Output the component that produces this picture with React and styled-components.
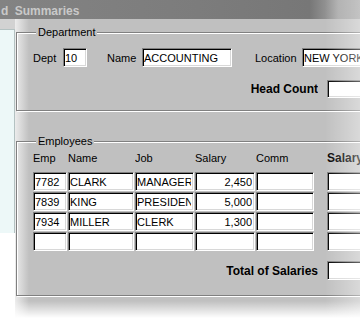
import React from 'react';
import styled, { createGlobalStyle } from 'styled-components';

const Global = createGlobalStyle`
  html, body { margin: 0; padding: 0; background: #fff; }
  body { font-family: "Liberation Sans", Arial, sans-serif; font-size: 11px; color: #000; }
`;

const Screen = styled.div`
  position: relative;
  width: 360px;
  height: 320px;
  overflow: hidden;
  background: #fff;
  display: flex;
  flex-direction: column;
  &::after {
    content: '';
    position: absolute;
    inset: 0;
    pointer-events: none;
    background: linear-gradient(to right, rgba(255,255,255,0) 325px, rgba(255,255,255,0.4) 360px);
  }
`;

const TitleBar = styled.div`
  flex: none;
  box-sizing: border-box;
  height: 19px;
  padding: 4px 0 0 1px;
  background: linear-gradient(to right, #838383 0%, #7c7c7c 55%, #777 86%, #a6a6a6 94%, #9c9c9c 100%);
  color: #c9c9c9;
  font-weight: bold;
  font-size: 12px;
  line-height: 14px;
  word-spacing: 3px;
  white-space: nowrap;
  overflow: hidden;
`;

const Main = styled.div`
  flex: 1;
  display: flex;
`;

const Side = styled.div`
  flex: none;
  width: 15px;
  display: flex;
  flex-direction: column;
  background: linear-gradient(to bottom, #d2d2d2 0, #d2d2d2 10px, #fff 10px);
`;

const SidePanel = styled.div`
  margin-top: 10px;
  box-sizing: border-box;
  height: 204px;
  background: #edf8f8;
  border-top: 1px solid #b4c2c2;
  border-right: 1px solid #b4c2c2;
`;

const Body = styled.div`
  flex: 1;
  padding-top: 13px;
  background:
    linear-gradient(to bottom, rgba(255,255,255,0) 0, rgba(255,255,255,0) 282px, #fff 299px),
    linear-gradient(to right, #ececec 0, #c0c0c0 14px);
`;

const GroupBox = styled.div`
  position: relative;
  box-sizing: border-box;
  width: 420px;
  height: ${p => p.h}px;
  margin-left: 1px;
  margin-top: ${p => p.mt || 0}px;
  border: 1px solid #808080;
  box-shadow: inset 1px 1px 0 #fff, 1px 1px 0 #fff;
  padding: ${p => p.pt}px 0 0 16px;
`;

const Legend = styled.span`
  position: absolute;
  top: -8px;
  left: 19px;
  padding: 0 2px;
  background: #c0c0c0;
  line-height: 14px;
  font-size: 11px;
`;

const Row = styled.div`
  display: flex;
  align-items: center;
  gap: ${p => p.gap || 0}px;
  margin-top: ${p => p.mt || 0}px;
  width: ${p => p.w ? `${p.w}px` : 'auto'};
  justify-content: ${p => p.end ? 'flex-end' : 'flex-start'};
`;

const Label = styled.span`
  flex: none;
  width: ${p => p.w ? `${p.w}px` : 'auto'};
  margin-left: ${p => p.ml || 0}px;
  margin-right: ${p => p.mr || 0}px;
  font-size: ${p => p.bold ? 12 : 11}px;
  font-weight: ${p => p.bold ? 'bold' : 'normal'};
  line-height: 16px;
  white-space: nowrap;
  overflow: hidden;
`;

const Field = styled.input`
  flex: none;
  box-sizing: border-box;
  width: ${p => p.w}px;
  height: ${p => p.h || 19}px;
  margin: 0;
  padding: 0 2px 0 1px;
  background: #fff;
  border-top: 1px solid #808080;
  border-left: 1px solid #808080;
  border-right: 1px solid #fff;
  border-bottom: 1px solid #fff;
  box-shadow: inset 1px 1px 0 #000, inset -1px -1px 0 #d8d8d8;
  font-family: "Liberation Sans", Arial, sans-serif;
  font-size: 11px;
  color: #000;
  text-align: ${p => p.right ? 'right' : 'left'};
  outline: none;
`;

const Rows = styled.div`
  display: flex;
  flex-direction: column;
  gap: 1px;
  margin-top: 6px;
`;

const COLS = [34, 66, 59, 60, 58];

const employees = [
  ['7782', 'CLARK', 'MANAGER', '2,450', ''],
  ['7839', 'KING', 'PRESIDENT', '5,000', ''],
  ['7934', 'MILLER', 'CLERK', '1,300', ''],
  ['', '', '', '', ''],
];

export default function App() {
  return (
    <>
      <Global />
      <Screen>
        <TitleBar>d Summaries</TitleBar>
        <Main>
          <Side>
            <SidePanel />
          </Side>
          <Body>
            <GroupBox h={79} pt={15}>
              <Legend>Department</Legend>
              <Row>
                <Label w={30}>Dept</Label>
                <Field w={24} readOnly value="10" />
                <Label w={35} ml={20}>Name</Label>
                <Field w={90} readOnly value="ACCOUNTING" />
                <Label w={47} ml={23}>Location</Label>
                <Field w={90} readOnly value="NEW YORK" />
              </Row>
              <Row mt={13} w={354} end="1">
                <Label bold mr={9}>Head Count</Label>
                <Field w={60} h={18} readOnly value="" />
              </Row>
            </GroupBox>
            <GroupBox h={155} mt={30} pt={8}>
              <Legend>Employees</Legend>
              <Row gap={1}>
                <Label w={COLS[0]}>Emp</Label>
                <Label w={COLS[1]}>Name</Label>
                <Label w={COLS[2]}>Job</Label>
                <Label w={COLS[3]}>Salary</Label>
                <Label w={COLS[4]}>Comm</Label>
                <Label bold ml={12}>Salary</Label>
              </Row>
              <Rows>
                {employees.map((r, i) => (
                  <Row key={i} gap={1}>
                    {r.map((v, j) => (
                      <Field key={j} w={COLS[j]} right={j === 3} readOnly value={v} />
                    ))}
                    <Field w={60} style={{ marginLeft: 12 }} readOnly value="" />
                  </Row>
                ))}
              </Rows>
              <Row mt={10} w={354} end="1">
                <Label bold mr={9}>Total of Salaries</Label>
                <Field w={60} readOnly value="" />
              </Row>
            </GroupBox>
          </Body>
        </Main>
      </Screen>
    </>
  );
}
